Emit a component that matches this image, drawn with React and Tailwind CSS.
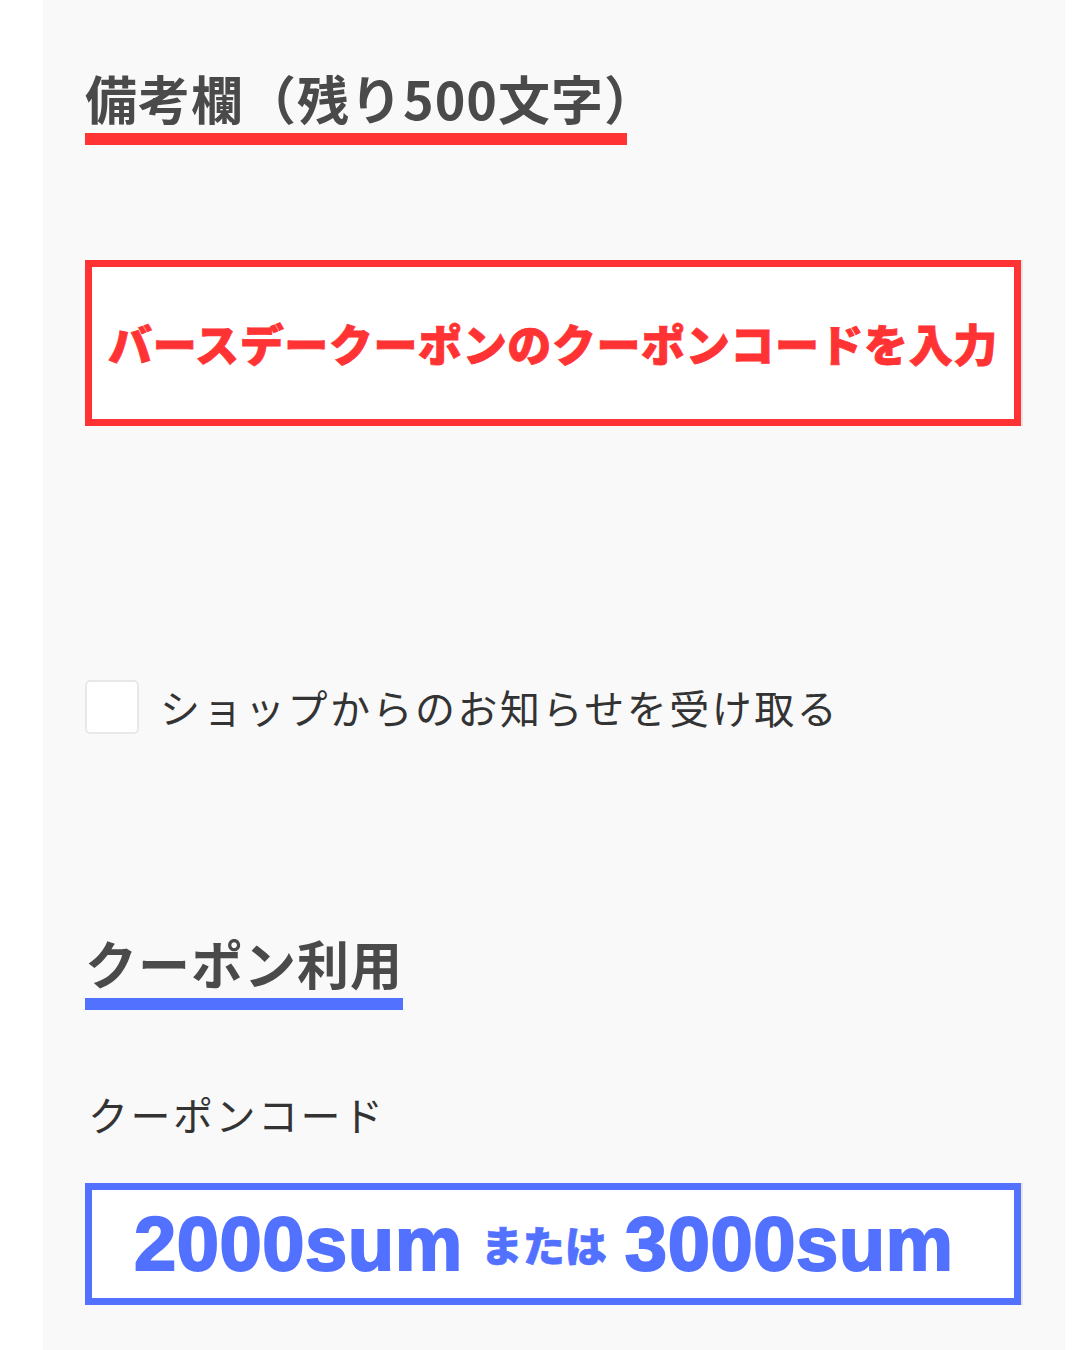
const jp = { fontFamily: '"Noto Sans CJK JP", "Noto Sans", sans-serif' };
const num = { fontFamily: '"Liberation Sans", Arial, sans-serif' };

const SectionTitle = ({ children, barColor, trim = "" }) => (
  <div className="inline-flex flex-col">
    <h2 className={`whitespace-nowrap text-[52px] leading-[60px] font-bold text-[#4a4a4a] tracking-[1px] ${trim}`}>
      {children}
    </h2>
    <div className={`mt-[5px] h-[12px] w-full ${barColor}`} />
  </div>
);

export default function App() {
  return (
    <div className="min-h-[1350px] w-[1080px] bg-white" style={jp}>
      <div className="ml-[43px] w-[1022px] min-h-[1350px] bg-[#f9f9f9] pl-[42px] pt-[68px]">
        <SectionTitle barColor="bg-[#ff3333]" trim="-mr-[30px]">
          備考欄（残り500文字）
        </SectionTitle>

        <div className="mt-[115px] flex h-[166px] w-[936px] items-center justify-center border-[7px] border-[#ff3333] bg-white shadow-[2px_0_0_#e6e6e6]">
          <span className="whitespace-nowrap text-[44px] font-black leading-none text-[#ff3333] tracking-[0.6px] [-webkit-text-stroke:0.8px_#ff3333]">
            バースデークーポンのクーポンコードを入力
          </span>
        </div>

        <label className="mt-[253px] flex items-center gap-[21px]">
          <input
            type="checkbox"
            className="h-[54px] w-[54px] shrink-0 appearance-none rounded-[5px] border-2 border-[#e8e8e8] bg-white"
          />
          <span className="whitespace-nowrap text-[40px] leading-[56px] text-[#333] tracking-[2.5px]">
            ショップからのお知らせを受け取る
          </span>
        </label>

        <div className="mt-[198px]">
          <SectionTitle barColor="bg-[#5271ff]">クーポン利用</SectionTitle>
        </div>

        <p className="mt-[76px] pl-[3px] text-[40px] leading-[56px] text-[#333] tracking-[2.5px]">
          クーポンコード
        </p>

        <div className="mt-[41px] flex h-[122px] w-[936px] items-center border-[7px] border-[#5271ff] bg-white pl-[42px] shadow-[2px_0_0_#e6e6e6]">
          <span
            className="whitespace-nowrap text-[76px] font-bold leading-none text-[#5271ff] tracking-[0.5px] [-webkit-text-stroke:2px_#5271ff]"
            style={num}
          >
            2000sum
          </span>
          <span className="ml-[18px] mr-[18px] whitespace-nowrap text-[42px] font-black leading-none text-[#5271ff] [-webkit-text-stroke:0.6px_#5271ff]">
            または
          </span>
          <span
            className="whitespace-nowrap text-[76px] font-bold leading-none text-[#5271ff] tracking-[0.5px] [-webkit-text-stroke:2px_#5271ff]"
            style={num}
          >
            3000sum
          </span>
        </div>
      </div>
    </div>
  );
}
